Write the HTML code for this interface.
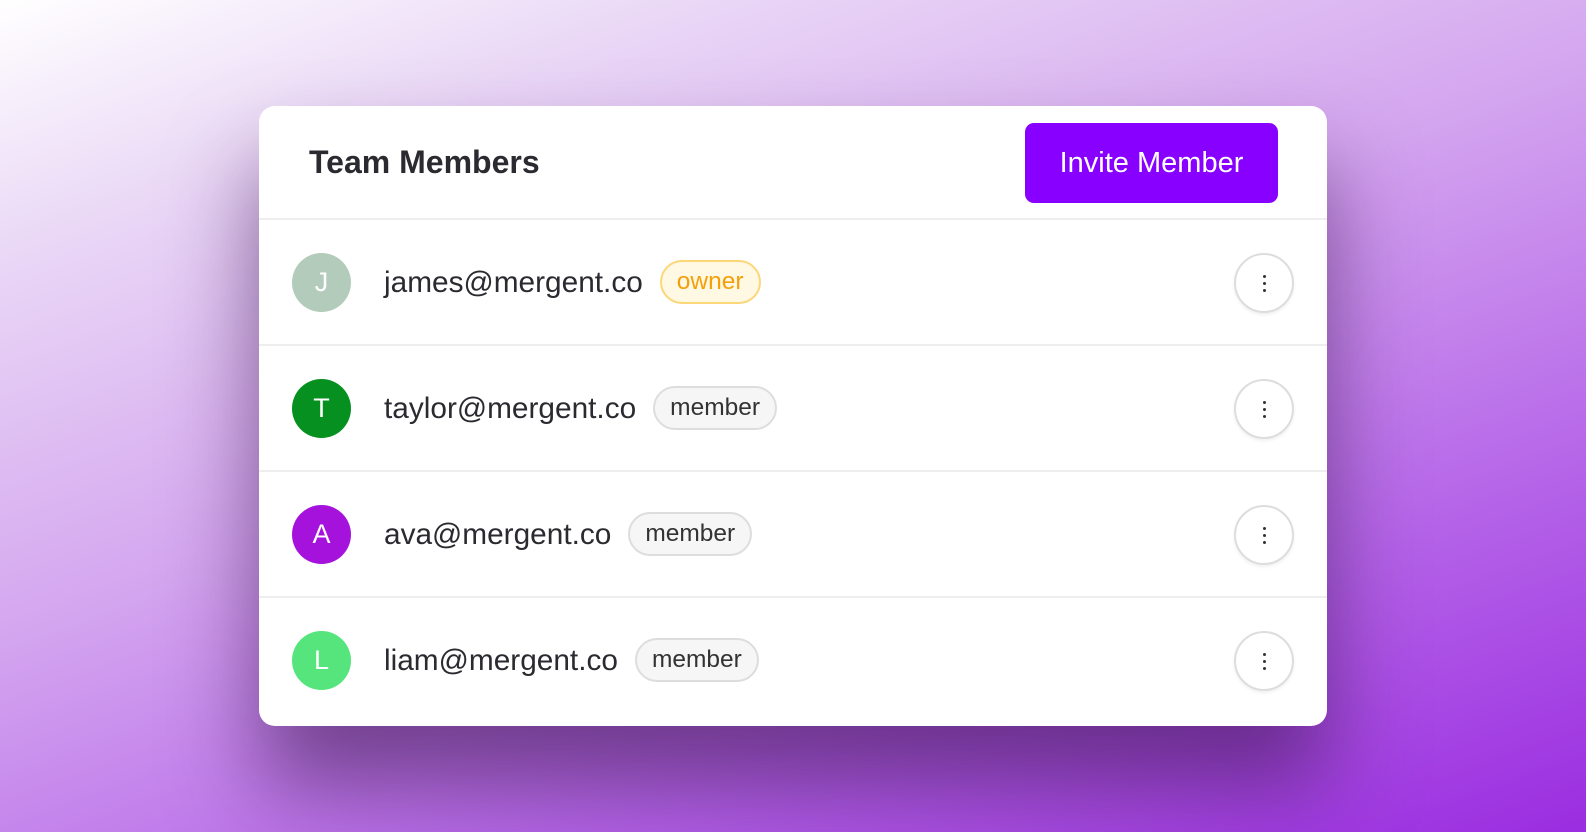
<!DOCTYPE html>
<html><head><style>
html,body{margin:0;padding:0;width:1586px;height:832px;overflow:hidden}
body{background:linear-gradient(160deg,#ffffff 0%,#ead8f6 18%,#d4a6ef 45%,#b462e8 75%,#9a2de0 100%);font-family:"Liberation Sans",sans-serif;position:relative}
.card{position:absolute;left:259px;top:106px;width:1068px;height:620px;background:#fff;border-radius:16px;box-shadow:0 60px 90px 0px rgba(60,20,80,.6);overflow:hidden}
.hdr{height:112px;border-bottom:2px solid #eee;position:relative}
.hdr h1{position:absolute;left:50px;top:38px;margin:0;font-size:32px;font-weight:bold;color:#2a2a30}
.btn{position:absolute;left:766px;top:17px;width:253px;height:80px;background:#8800ff;border-radius:9px;color:#fff;font-size:29px;text-align:center;line-height:80px}
.row{height:124px;border-bottom:2px solid #eee;position:relative}
.row:last-child{border-bottom:none}
.av{position:absolute;left:33px;top:33px;width:59px;height:59px;border-radius:50%;color:#fff;font-size:27px;text-align:center;line-height:59px}
.em{position:absolute;left:125px;top:42px;font-size:29.8px;color:#2a2a30}
.tag{display:inline-block;vertical-align:middle;margin-left:17px;border:2px solid #ddd;background:#f6f6f6;border-radius:22px;padding:0 15px;height:40px;line-height:40px;font-size:24.5px;color:#333;position:relative;top:-2px}
.tag.o{border-color:#fbd77a;background:#fff8e3;color:#f5a00a}
.kb{position:absolute;left:975px;top:33px;width:56px;height:56px;border:2px solid #ddd;border-radius:50%;box-shadow:0 2px 3px rgba(0,0,0,.06)}
.kb i{position:absolute;left:27px;width:3px;height:3px;border-radius:50%;background:#333}
</style></head><body>
<div class="card">
<div class="hdr"><h1>Team Members</h1><div class="btn">Invite Member</div></div>
<div class="row"><div class="av" style="background:#b3cbbb">J</div><div class="em">james@mergent.co<span class="tag o">owner</span></div><div class="kb"><i style="top:20px"></i><i style="top:27px"></i><i style="top:34px"></i></div></div>
<div class="row"><div class="av" style="background:#05901f">T</div><div class="em">taylor@mergent.co<span class="tag">member</span></div><div class="kb"><i style="top:20px"></i><i style="top:27px"></i><i style="top:34px"></i></div></div>
<div class="row"><div class="av" style="background:#a512db">A</div><div class="em">ava@mergent.co<span class="tag">member</span></div><div class="kb"><i style="top:20px"></i><i style="top:27px"></i><i style="top:34px"></i></div></div>
<div class="row"><div class="av" style="background:#56e57c">L</div><div class="em">liam@mergent.co<span class="tag">member</span></div><div class="kb"><i style="top:20px"></i><i style="top:27px"></i><i style="top:34px"></i></div></div>
</div>
</body></html>
